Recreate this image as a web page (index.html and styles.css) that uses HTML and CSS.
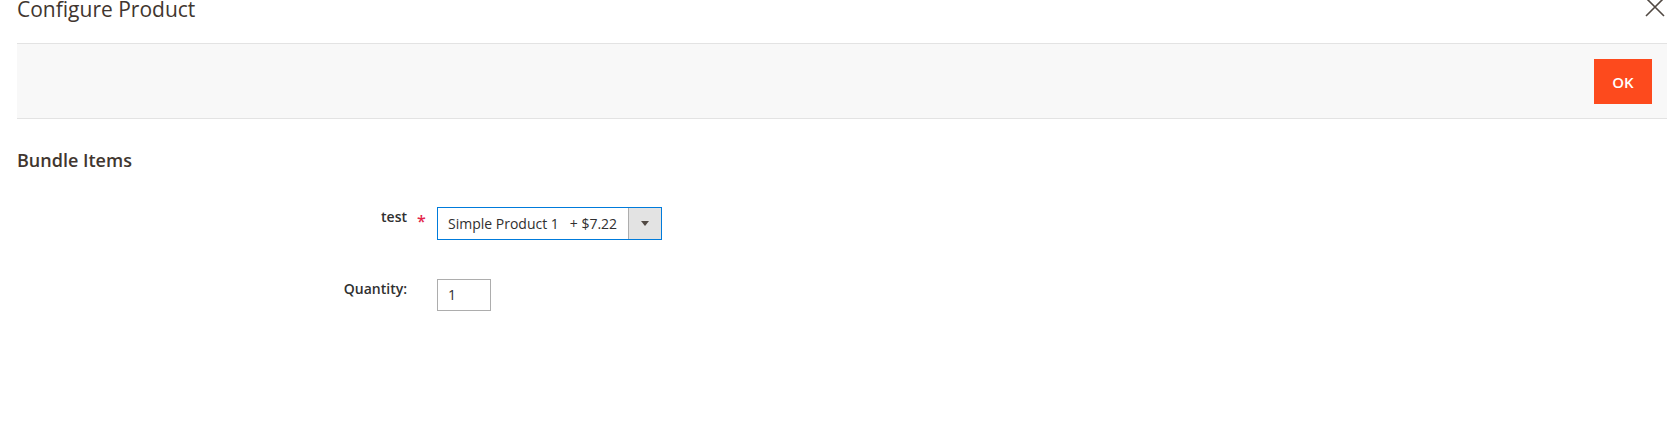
FILE: index.html
```html
<!DOCTYPE html>
<html>
<head>
<meta charset="utf-8">
<link rel="stylesheet" href="styles.css">
</head>
<body>
<div class="modal">
  <header class="modal-header">
    <h1 class="modal-title">Configure Product</h1>
    <button class="action-close" aria-label="Close">
      <svg width="20" height="20" viewBox="0 0 20 20"><path d="M1 1 L19 19 M19 1 L1 19" stroke="#514943" stroke-width="1.6" fill="none"/></svg>
    </button>
  </header>
  <div class="page-actions">
    <button class="action-primary">OK</button>
  </div>
  <div class="fieldset">
    <h2 class="fieldset-title">Bundle Items</h2>
    <div class="field">
      <label class="field-label">test</label>
      <span class="required">*</span>
      <div class="select">
        <span class="select-value">Simple Product 1&nbsp;&nbsp; + $7.22</span>
        <span class="select-arrow"><span class="triangle"></span></span>
      </div>
    </div>
    <div class="field field-qty">
      <label class="field-label">Quantity:</label>
      <span class="required"></span>
      <div class="qty-input">1</div>
    </div>
  </div>
</div>
</body>
</html>
```

FILE: styles.css
```css
html, body {
  margin: 0;
  padding: 0;
  background: #ffffff;
  font-family: "Open Sans", "Liberation Sans", sans-serif;
  color: #303030;
  overflow: hidden;
}

.modal {
  padding: 0 7px 0 17px;
}

.modal-header {
  position: relative;
  display: flow-root;
  height: 43px;
}

.modal-title {
  margin: -2px 0 0 0;
  font-size: 21px;
  line-height: 22px;
  font-weight: 400;
  color: #41362f;
}

.action-close {
  position: absolute;
  top: -3px;
  right: 2px;
  padding: 0;
  border: 0;
  background: none;
  width: 20px;
  height: 20px;
}

.page-actions {
  display: flex;
  justify-content: flex-end;
  background: #f8f8f8;
  border-top: 1px solid #e3e3e3;
  border-bottom: 1px solid #e3e3e3;
  padding: 15px 15px 14px 15px;
}

.action-primary {
  width: 58px;
  height: 45px;
  border: 0;
  background: #fd4a1d;
  color: #ffffff;
  font-family: "Open Sans", "Liberation Sans", sans-serif;
  font-size: 15px;
  font-weight: 600;
  padding: 0;
}

.fieldset-title {
  margin: 29px 0 0 0;
  font-size: 18px;
  line-height: 24px;
  font-weight: 600;
  color: #41362f;
}

.field {
  display: grid;
  grid-template-columns: 390px 30px auto;
  align-items: start;
  margin-top: 35px;
}

.field-qty {
  margin-top: 39px;
}

.field-label {
  text-align: right;
  font-size: 14px;
  font-weight: 600;
  line-height: 20px;
  padding-top: 0;
  color: #303030;
}

.required {
  color: #e3264a;
  font-size: 16px;
  font-weight: 600;
  padding-left: 10px;
  padding-top: 4px;
  line-height: 20px;
}

.select {
  display: flex;
  width: 225px;
  height: 33px;
  box-sizing: border-box;
  border: 1px solid #007bdb;
  background: #ffffff;
}

.select-value {
  flex: 1;
  font-size: 14px;
  line-height: 31px;
  padding-left: 10px;
  white-space: nowrap;
  color: #303030;
}

.select-arrow {
  width: 32px;
  background: #e3e3e3;
  border-left: 1px solid #adadad;
  display: flex;
  align-items: center;
  justify-content: center;
}

.triangle {
  width: 0;
  height: 0;
  border-left: 4px solid transparent;
  border-right: 4px solid transparent;
  border-top: 5px solid #514943;
}

.qty-input {
  width: 54px;
  height: 32px;
  box-sizing: border-box;
  border: 1px solid #adadad;
  font-size: 14px;
  line-height: 30px;
  padding-left: 10px;
  color: #303030;
}
```
